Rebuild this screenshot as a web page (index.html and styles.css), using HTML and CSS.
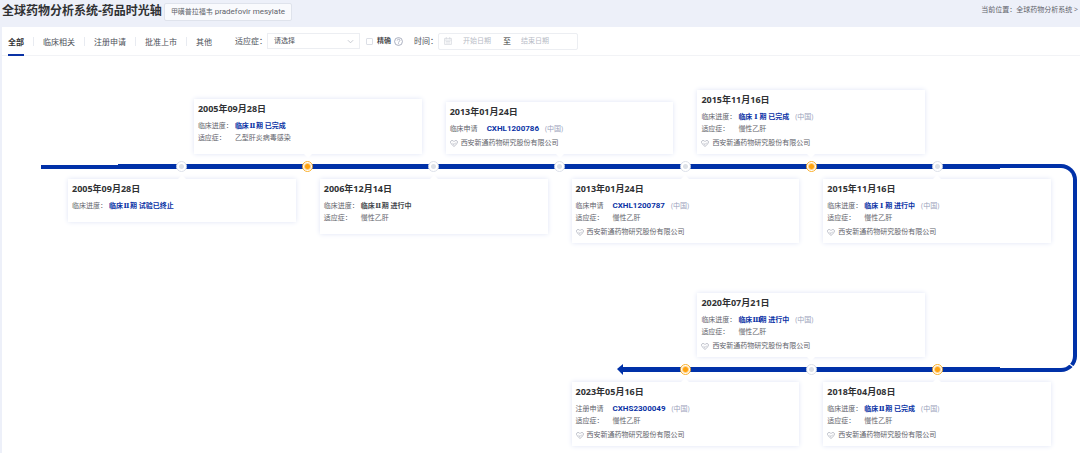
FILE: index.html
```html
<!DOCTYPE html>
<html lang="zh-CN">
<head>
<meta charset="utf-8">
<title>全球药物分析系统-药品时光轴</title>
<link rel="stylesheet" href="styles.css">
</head>
<body>
<svg class="sprite" aria-hidden="true">
  <symbol id="heart" viewBox="0 0 16 14">
    <path d="M8 13 2 7.200C-.2 4.800.8 1 4.300 1 6 1 7.200 1.800 8 3.200 8.800 1.800 10 1 11.700 1 15.200 1 16.200 4.800 14 7.200ZM5 6.500 8 9 12 5" fill="none" stroke="currentColor" stroke-width="1.400"/>
  </symbol>
</svg>
<header class="header">
  <h1 class="title">全球药物分析系统-药品时光轴</h1>
  <span class="drug">甲磺普拉福韦 <span class="latin">pradefovir mesylate</span></span>
  <nav class="crumbs">当前位置：<a href="#">全球药物分析系统</a> &gt;</nav>
</header>
<main class="panel">
  <form class="toolbar">
    <div class="tabs">
      <button type="button" class="tab active">全部</button>
      <button type="button" class="tab">临床相关</button>
      <button type="button" class="tab">注册申请</button>
      <button type="button" class="tab">批准上市</button>
      <button type="button" class="tab">其他</button>
    </div>
    <label class="field-label" for="indication">适应症：</label>
    <div class="select-box">
      <select id="indication"><option>请选择</option></select>
      <svg class="chevron" viewBox="0 0 8 5"><path d="M1 1 4 4 7 1" fill="none" stroke="currentColor"/></svg>
    </div>
    <label class="exact"><input type="checkbox">精确</label>
    <svg class="help" viewBox="0 0 16 16"><circle cx="8" cy="8" r="7" fill="none" stroke="currentColor" stroke-width="1.500"/><path d="M5.700 6.300C5.700 3.100 10.500 3.200 10.500 6.100 10.500 7.900 8 8 8 10M8 11.200V12.700" fill="none" stroke="currentColor" stroke-width="1.500"/></svg>
    <label class="time-label" for="start">时间：</label>
    <div class="range">
      <svg class="calendar" viewBox="0 0 14 14"><path d="M1 2.500H13V13H1ZM1 5.500H13M4 0V4M10 0V4M3 8H11M3 10.500H11" fill="none" stroke="currentColor" stroke-width="1.300"/></svg>
      <input id="start" type="text" placeholder="开始日期">
      <span class="to">至</span>
      <input type="text" placeholder="结束日期" aria-label="结束日期">
    </div>
  </form>

  <section class="timeline">
    <div class="bend"></div>
    <div class="line lead"></div>
    <div class="line first"></div>
    <div class="line second"></div>

    <i class="node axis-1 col-1"></i>
    <i class="node axis-1 col-2 hot"></i>
    <i class="node axis-1 col-3"></i>
    <i class="node axis-1 col-4"></i>
    <i class="node axis-1 col-5"></i>
    <i class="node axis-1 col-6 hot"></i>
    <i class="node axis-1 col-7"></i>
    <i class="node axis-2 col-5 hot"></i>
    <i class="node axis-2 col-6"></i>
    <i class="node axis-2 col-7 hot"></i>

    <article class="card above row-1 col-2">
      <h2>2005年09月28日</h2>
      <p><span class="key">临床进度：</span><a href="#">临床<span class="roman">Ⅱ</span>期 已完成</a></p>
      <p><span class="key">适应症：</span>乙型肝炎病毒感染</p>
    </article>
    <article class="card above row-1 col-4 with-company">
      <h2>2013年01月24日</h2>
      <p><span class="key">临床申请</span><a href="#" class="code">CXHL1200786</a><span class="region">(中国)</span></p>
      <p class="company"><svg><use href="#heart"/></svg>西安新通药物研究股份有限公司</p>
    </article>
    <article class="card above row-1 col-6 with-company">
      <h2>2015年11月16日</h2>
      <p><span class="key">临床进度：</span><a href="#">临床<span class="roman">Ⅰ</span>期 已完成</a><span class="region">(中国)</span></p>
      <p><span class="key">适应症：</span>慢性乙肝</p>
      <p class="company"><svg><use href="#heart"/></svg>西安新通药物研究股份有限公司</p>
    </article>

    <article class="card below row-3 col-1">
      <h2>2005年09月28日</h2>
      <p><span class="key">临床进度：</span><a href="#">临床<span class="roman">Ⅱ</span>期 试验已终止</a></p>
    </article>
    <article class="card below row-3 col-3">
      <h2>2006年12月14日</h2>
      <p><span class="key">临床进度：</span><span class="stage">临床<span class="roman">Ⅱ</span>期 进行中</span></p>
      <p><span class="key">适应症：</span>慢性乙肝</p>
    </article>
    <article class="card below row-3 col-5 with-company">
      <h2>2013年01月24日</h2>
      <p><span class="key">临床申请</span><a href="#" class="code">CXHL1200787</a><span class="region">(中国)</span></p>
      <p><span class="key">适应症：</span>慢性乙肝</p>
      <p class="company"><svg><use href="#heart"/></svg>西安新通药物研究股份有限公司</p>
    </article>
    <article class="card below row-3 col-7 with-company">
      <h2>2015年11月16日</h2>
      <p><span class="key">临床进度：</span><a href="#">临床<span class="roman">Ⅰ</span>期 进行中</a><span class="region">(中国)</span></p>
      <p><span class="key">适应症：</span>慢性乙肝</p>
      <p class="company"><svg><use href="#heart"/></svg>西安新通药物研究股份有限公司</p>
    </article>

    <article class="card above row-4 col-6 with-company">
      <h2>2020年07月21日</h2>
      <p><span class="key">临床进度：</span><a href="#">临床<span class="roman">Ⅲ</span>期 进行中</a><span class="region">(中国)</span></p>
      <p><span class="key">适应症：</span>慢性乙肝</p>
      <p class="company"><svg><use href="#heart"/></svg>西安新通药物研究股份有限公司</p>
    </article>
    <article class="card below row-6 col-5 with-company">
      <h2>2023年05月16日</h2>
      <p><span class="key">注册申请</span><a href="#" class="code">CXHS2300049</a><span class="region">(中国)</span></p>
      <p><span class="key">适应症：</span>慢性乙肝</p>
      <p class="company"><svg><use href="#heart"/></svg>西安新通药物研究股份有限公司</p>
    </article>
    <article class="card below row-6 col-7 with-company">
      <h2>2018年04月08日</h2>
      <p><span class="key">临床进度：</span><a href="#">临床<span class="roman">Ⅱ</span>期 已完成</a><span class="region">(中国)</span></p>
      <p><span class="key">适应症：</span>慢性乙肝</p>
      <p class="company"><svg><use href="#heart"/></svg>西安新通药物研究股份有限公司</p>
    </article>
  </section>
</main>
</body>
</html>
```
FILE: styles.css
```css
* { box-sizing: border-box; }
body {
  margin: 0;
  min-height: 100vh;
  display: flex;
  flex-direction: column;
  background: #edf0f9;
  color: #5f636b;
  font: 7px/12px "Open Sans", "Noto Sans CJK SC", sans-serif;
}
h1, h2, p { margin: 0; }
a { color: inherit; text-decoration: none; }
button, input, select { font: inherit; color: inherit; margin: 0; padding: 0; border: 0; background: none; }
.sprite { position: absolute; width: 0; height: 0; }

.header { display: flex; align-items: flex-start; height: 27px; padding: 3px 2px 0; }
.title { font-size: 12px; line-height: 16px; color: #303133; white-space: nowrap; }
.drug {
  margin-left: 2px;
  padding: 0 6px;
  border: 1px solid #dfe3ec;
  border-radius: 2px;
  background: #f9fafd;
  line-height: 16px;
  white-space: nowrap;
}
.latin { font-family: Roboto, sans-serif; font-size: 8px; }
.crumbs { margin-left: auto; line-height: 14px; white-space: nowrap; }

.panel { flex: 1; margin-left: 2px; background: #fff; }
.toolbar {
  display: flex;
  align-items: center;
  height: 29px;
  padding-left: 6px;
  border-bottom: 1px solid #f2f3f6;
  font-size: 8px;
  color: #4c5058;
  white-space: nowrap;
}
.tabs { display: flex; align-self: stretch; gap: 19px; }
.tab { position: relative; height: 29px; }
.tab + .tab::before {
  content: "";
  position: absolute;
  left: -10px;
  top: 10px;
  width: 1px;
  height: 9px;
  background: #e8ebf1;
}
.active { font-weight: 700; color: #303133; border-top: 2px solid transparent; border-bottom: 2px solid #0a32a5; }
.field-label { margin-left: 23px; }
.select-box { display: flex; align-items: center; width: 93px; height: 16px; border: 1px solid #eceef2; font-size: 7px; }
.select-box select { appearance: none; flex: 1; min-width: 0; height: 14px; padding-left: 6px; }
.chevron { width: 7px; height: 5px; margin-right: 5px; color: #c0c4cc; }
.exact { display: flex; align-items: center; gap: 4px; margin-left: 6px; font-size: 7px; font-weight: 500; color: #303133; }
.exact input { appearance: none; width: 7px; height: 7px; border: 1px solid #dcdfe6; border-radius: 1px; }
.help { width: 9px; height: 9px; margin-left: 3px; color: #9da3b5; }
.time-label { margin-left: 11px; }
.range { display: flex; align-items: center; width: 140px; height: 17px; padding-left: 5px; border: 1px solid #eceef2; border-radius: 2px; font-size: 7px; }
.range input { width: 40px; }
.range input::placeholder { color: #b8bcc6; opacity: 1; }
.calendar { width: 8px; height: 8px; margin-right: 11px; color: #d5d8df; }
.to { width: 18px; font-size: 8px; color: #303133; }

.timeline {
  display: grid;
  grid-template-columns: repeat(8, 1fr);
  grid-template-rows: minmax(98px, auto) 25px auto minmax(114px, auto) 25px auto;
  column-gap: 24px;
  padding: 0 29px 6px 66px;
}
.row-1 { grid-row: 1; }
.row-3 { grid-row: 3; }
.row-4 { grid-row: 4; }
.row-6 { grid-row: 6; }
.axis-1 { grid-row: 2; }
.axis-2 { grid-row: 5; }
.col-1 { grid-column: 1 / span 2; }
.col-2 { grid-column: 2 / span 2; }
.col-3 { grid-column: 3 / span 2; }
.col-4 { grid-column: 4 / span 2; }
.col-5 { grid-column: 5 / span 2; }
.col-6 { grid-column: 6 / span 2; }
.col-7 { grid-column: 7 / span 2; }

.line { align-self: center; height: 5px; background: #0031a8; }
.lead { grid-area: 2 / 1 / 3 / 2; width: 77px; height: 4px; margin: 1px 0 0 -27px; }
.first { grid-area: 2 / 1 / 3 / 9; margin: 0 51px 0 50px; }
.second { position: relative; grid-area: 5 / 5 / 6 / 9; margin: 0 51px 0 49px; }
.second::before {
  content: "";
  position: absolute;
  left: -4px;
  top: -3px;
  border: solid transparent;
  border-width: 5px 6px 6px 0;
  border-right-color: #0031a8;
}
.bend {
  position: relative;
  grid-area: 2 / 8 / 6 / 9;
  margin: 10px -26px 10px 50px;
  border: 4px solid #0031a8;
  border-left: 0;
  border-radius: 0 16px 16px 0;
}
.bend::after {
  content: "";
  position: absolute;
  right: -2px;
  bottom: 2px;
  width: 7px;
  height: 1px;
  background: #fff;
  transform: rotate(35deg);
}
.node {
  position: relative;
  align-self: center;
  justify-self: center;
  width: 11px;
  height: 11px;
  border: 1px solid #dde1ea;
  border-radius: 50%;
  background: radial-gradient(circle, #dce0e6 2px, #fff 3px);
}
.hot { border-color: #fbb02c; background: radial-gradient(circle, #ffa30f 2px, #fff 4px); }

.card {
  position: relative;
  padding: 3px 4px 10px;
  background: #fff;
  box-shadow: 0 0 5px #dfe4f5;
  white-space: nowrap;
}
.with-company { padding-bottom: 5px; }
.above { align-self: end; }
.below { align-self: start; }
.card::before {
  content: "";
  position: absolute;
  left: calc(50% - 4px);
  border: 4px solid transparent;
}
.above::before { top: 100%; border-top-color: #fff; }
.below::before { bottom: 100%; border-bottom-color: #fff; }
.card h2 { margin-bottom: 4px; font-size: 9px; line-height: 14px; color: #303133; }
.card p { display: flex; height: 12px; }
.key { width: 37px; }
.card a, .stage { font-weight: 700; color: #0a32a5; }
.card .stage { color: #45484e; }
.card .code { font-family: Roboto, sans-serif; font-size: 8px; }
.roman { display: inline-block; width: 7px; text-align: center; font-family: "DejaVu Serif", serif; line-height: 8px; }
.region { margin-left: 6px; color: #9aa2bb; }
.card .company { align-items: center; margin-top: 2px; gap: 3px; }
.company svg { width: 8px; height: 7px; color: #a3a8b5; }
```
